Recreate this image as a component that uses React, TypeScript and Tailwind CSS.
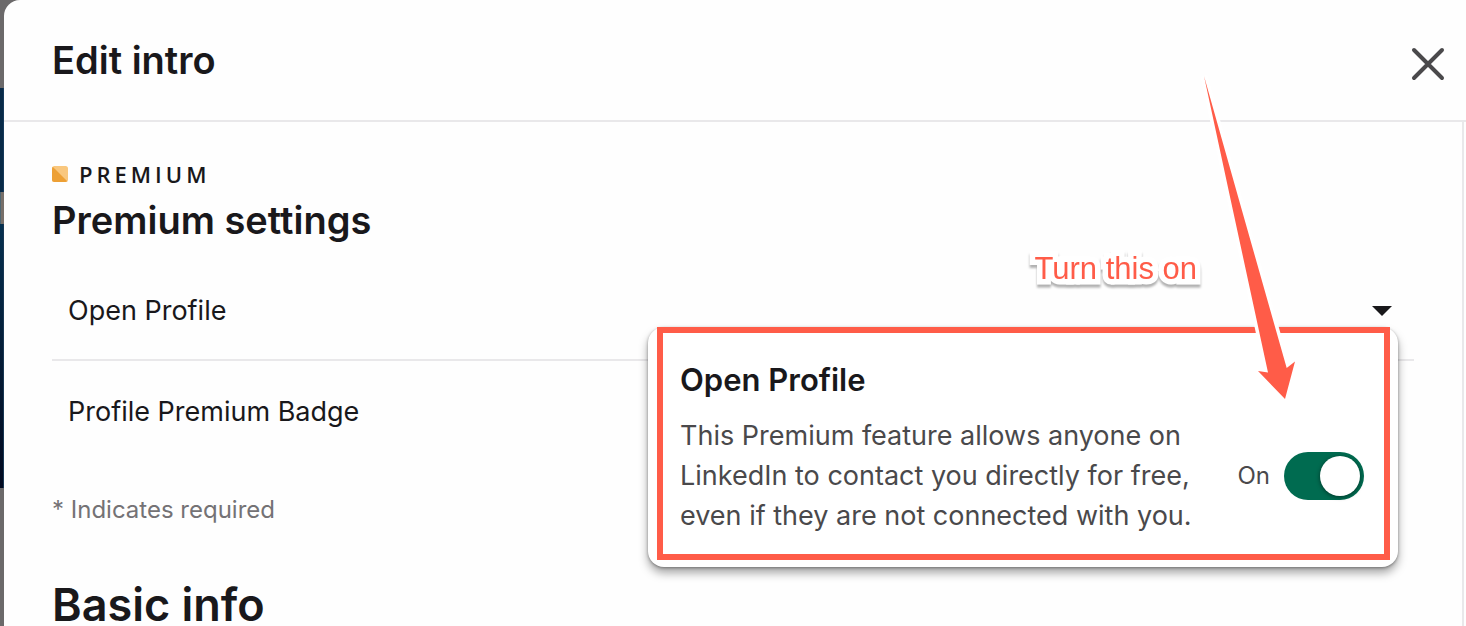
import { useState } from "react";

function PageBehind() {
  return (
    <div className="flex w-1 shrink-0 flex-col" aria-hidden="true">
      <div className="h-22" />
      <div className="h-26 border-r border-[#15395a] bg-[#082a48]" />
      <div className="h-8 border-l border-[#4e6672] bg-[#776f69]" />
      <div className="h-66 border-r border-[#173652] bg-linear-to-b from-[#06304f] to-[#020a20]" />
    </div>
  );
}

function PremiumLabel() {
  return (
    <div className="flex items-center gap-[11px]">
      <svg className="size-4" viewBox="0 0 16 16" aria-hidden="true">
        <rect width="16" height="16" rx="2.5" fill="#f9c77e" />
        <path d="M.7.7 15.300 15.300 13.500 16h-11A2.500 2.500 0 0 1 0 13.500v-11Z" fill="#eda035" />
      </svg>
      <span className="font-['Open_Sans',sans-serif] text-[22px] leading-6 font-semibold tracking-[4px] uppercase">
        Premium
      </span>
    </div>
  );
}

function OpenProfilePopover() {
  const [on, setOn] = useState(true);

  return (
    <div className="absolute top-[68px] right-4 w-[750px] rounded-2xl bg-white pr-2 pb-[7px] pl-[9px] shadow-[0_6px_10px_rgba(0,0,0,0.35),0_1px_3px_rgba(0,0,0,0.35)]">
      <div className="border-6 border-[#ff5c48] pt-[27px] pr-5 pb-[18px] pl-[17px]">
        <h3 className="text-[31px] leading-10 font-semibold">Open Profile</h3>
        <div className="mt-4 flex items-center justify-between">
          <p className="w-[530px] text-[27px] leading-10 text-[#4a494b]">
            This Premium feature allows anyone on LinkedIn to contact you
            directly for free, even if they are not connected with you.
          </p>
          <label className="flex items-center gap-3.5 text-2xl text-[#4a494b]">
            {on ? "On" : "Off"}
            <input
              type="checkbox"
              role="switch"
              checked={on}
              onChange={() => setOn(!on)}
              className="flex h-12 w-20 appearance-none items-center rounded-full bg-[#8c8c8c] px-1 before:size-10 before:rounded-full before:bg-white before:shadow-[0_1px_4px_rgba(0,0,0,0.5)] checked:justify-end checked:bg-[#006b50]"
            />
          </label>
        </div>
      </div>
    </div>
  );
}

function Arrow() {
  return (
    <svg
      className="pointer-events-none absolute top-[76px] right-[171px] h-[323px] w-[91px] overflow-visible"
      viewBox="0 0 91 323"
      aria-hidden="true"
    >
      <path
        d="M0 0 26.700 124 64 296.500 54 295 81 323 91 285.500 82.700 292 35 124Z"
        fill="#ff5c48"
        stroke="#fff"
        strokeWidth="7"
        paintOrder="stroke"
      />
    </svg>
  );
}

export default function App() {
  return (
    <div className="relative flex h-screen overflow-hidden bg-[#6b696a] font-[Inter,sans-serif] text-[#19181b]">
      <PageBehind />

      <div
        role="dialog"
        aria-labelledby="dialog-title"
        className="flex min-w-0 flex-1 flex-col overflow-hidden rounded-tl-2xl bg-[#fefefe]"
      >
        <header className="flex items-end justify-between border-b-2 border-[#e9e8ea] pt-8 pr-3.5 pb-8 pl-12">
          <h1 id="dialog-title" className="text-[38px] leading-14 font-semibold">
            Edit intro
          </h1>
          <button
            type="button"
            aria-label="Dismiss"
            className="grid size-12 place-items-center text-[#4a494b]"
          >
            <svg
              className="size-9"
              viewBox="0 0 36 36"
              fill="none"
              stroke="currentColor"
              strokeWidth="4"
              strokeLinecap="round"
            >
              <path d="M4 4 32 32M32 4 4 32" />
            </svg>
          </button>
        </header>

        <main className="mr-0.5 min-h-0 flex-1 overflow-x-hidden overflow-y-auto border-r-2 border-[#e9e8ea] px-12 pt-10">
          <PremiumLabel />
          <h2 className="mt-2.5 text-[38px] leading-12 font-semibold">
            Premium settings
          </h2>

          <ul className="mt-[15px] text-[27px] leading-10">
            <li className="relative border-b-2 border-[#e9e8ea]">
              <button
                type="button"
                aria-expanded="true"
                className="flex w-full items-center justify-between pt-8 pr-[22px] pb-7 pl-4 text-left"
              >
                Open Profile
                <svg className="h-2.5 w-5" viewBox="0 0 20 10" aria-hidden="true">
                  <path d="M0 0H20L10 10Z" fill="currentColor" />
                </svg>
              </button>
              <OpenProfilePopover />
            </li>
            <li>
              <button type="button" className="px-4 pt-[31px] pb-7 text-left">
                Profile Premium Badge
              </button>
            </li>
          </ul>

          <p className="mt-[34px] text-2xl text-[#747275]">* Indicates required</p>
          <h2 className="mt-[59px] overflow-hidden text-[45px] leading-10 font-semibold">
            Basic info
          </h2>
        </main>
      </div>

      <Arrow />
      <span className="absolute top-[251px] right-[269px] font-['Liberation_Sans',sans-serif] text-[31px] leading-9 text-[#ff5c48] drop-shadow-[0_3px_1px_rgba(0,0,0,0.3)] [-webkit-text-stroke:11px_white] [paint-order:stroke_fill] [stroke-linejoin:round]">
        Turn this on
      </span>
    </div>
  );
}
